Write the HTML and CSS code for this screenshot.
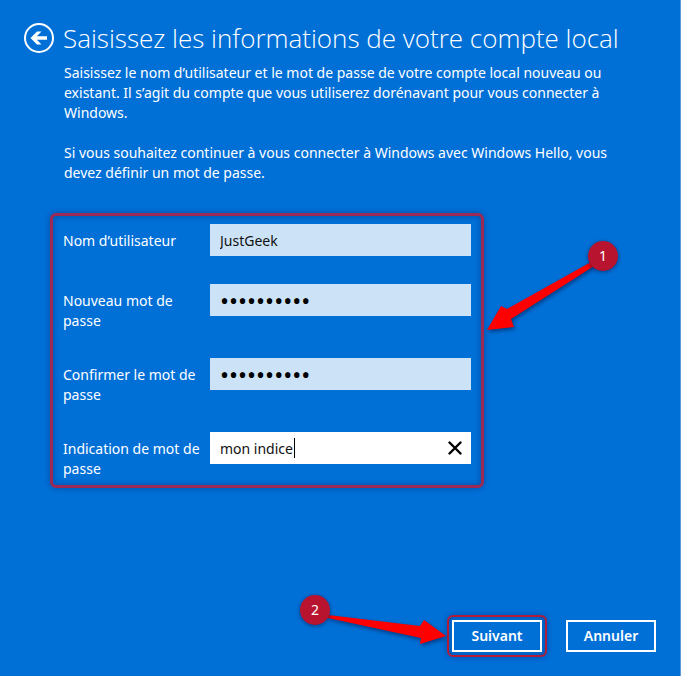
FILE: index.html
```html
<!DOCTYPE html>
<html lang="fr">
  <head>
    <meta charset="UTF-8" />
    <meta name="viewport" content="width=device-width, initial-scale=1.0" />
    <title>Compte local</title>
    <link rel="stylesheet" href="styles.css">
  </head>
  <body>
    <header class="header">
      <button type="button" class="btn-back" aria-label="Retour">
        <svg viewBox="0 0 30 30" width="30" height="30">
          <circle cx="15" cy="15" r="14" fill="none" stroke="#fff" stroke-width="2" />
          <path d="M6.5 15 L13 8.5 H17.5 L12.8 13.2 H23 V16.8 H12.8 L17.5 21.5 H13 Z" fill="#fff" />
        </svg>
      </button>
      <h1>Saisissez les informations de votre compte local</h1>
    </header>

    <main class="content">
      <div class="intro">
        <p>
          Saisissez le nom d’utilisateur et le mot de passe de votre compte local nouveau ou<br />
          existant. Il s’agit du compte que vous utiliserez dorénavant pour vous connecter à<br />
          Windows.
        </p>
        <p>
          Si vous souhaitez continuer à vous connecter à Windows avec Windows Hello, vous<br />
          devez définir un mot de passe.
        </p>
      </div>

      <form id="account" class="account highlight">
        <div class="form-group">
          <label for="username">Nom d’utilisateur</label>
          <input type="text" id="username" value="JustGeek" />
        </div>
        <div class="form-group">
          <label for="password">Nouveau mot de<br />passe</label>
          <input type="password" id="password" value="motdepasse" />
        </div>
        <div class="form-group">
          <label for="confirm">Confirmer le mot de<br />passe</label>
          <input type="password" id="confirm" value="motdepasse" />
        </div>
        <div class="form-group">
          <label for="hint">Indication de mot de<br />passe</label>
          <div class="field">
            <input type="text" id="hint" class="active" value="mon indice" />
            <span class="caret"></span>
            <button type="button" class="btn-clear" aria-label="Effacer">
              <svg viewBox="0 0 14 14" width="14" height="14">
                <path d="M1.5 1.5 L12.5 12.5 M12.5 1.5 L1.5 12.5" stroke="#000" stroke-width="2.4" stroke-linecap="round" />
              </svg>
            </button>
          </div>
        </div>

        <div class="callout callout-form">
          <svg viewBox="0 0 136 96" width="136" height="96">
            <path d="M107 25 L23 72 L17 69 L3 93 L30 90 L27 82 L110 29 Z" fill="#f00" />
          </svg>
          <span class="step">1</span>
        </div>
      </form>
    </main>

    <footer class="actions">
      <div class="highlight next">
        <button type="submit" form="account" class="btn">Suivant</button>
        <div class="callout callout-next">
          <svg viewBox="0 0 152 64" width="152" height="64">
            <path d="M32 20 L124 31 L128 25 L150 41 L124 49 L125 43 L32 23 Z" fill="#f00" />
          </svg>
          <span class="step">2</span>
        </div>
      </div>
      <button type="button" class="btn">Annuler</button>
    </footer>
  </body>
</html>
```
FILE: styles.css
```css
* {
  box-sizing: border-box;
}

body {
  display: flex;
  flex-direction: column;
  min-height: 100vh;
  margin: 0;
  border-right: 1px solid #5b9bdc;
  background-color: #0070d7;
  color: #fff;
  font-family: "Noto Sans", "Open Sans", sans-serif;
  font-size: 14px;
  line-height: 20px;
}

.header {
  display: flex;
  align-items: center;
  gap: 9px;
  padding: 20px 24px 0;
}

h1 {
  margin: 0;
  font-family: "Open Sans", "Noto Sans", sans-serif;
  font-size: 26px;
  font-weight: 300;
  line-height: 36px;
  white-space: nowrap;
}

.btn-back,
.btn-clear {
  display: flex;
  padding: 0;
  border: none;
  background: none;
  cursor: pointer;
}

.content {
  padding: 7px 24px 24px 50px;
}

.intro {
  padding-left: 14px;
  white-space: nowrap;
}

.intro p {
  margin: 0 0 20px;
}

/* Red frame around the parts to fill in or click */
.highlight {
  position: relative;
  border: 3px solid #9c2a55;
  border-radius: 6px;
  box-shadow: 0 0 6px rgba(0, 20, 90, 0.4), inset 0 0 6px rgba(0, 20, 90, 0.4);
}

.account {
  display: flex;
  flex-direction: column;
  gap: 27px;
  width: 434px;
  margin-top: 30px;
  padding: 8px 10px 6px;
}

.form-group {
  display: grid;
  grid-template-columns: 147px 1fr;
  align-items: start;
}

.form-group:first-child {
  margin-bottom: 1px;
}

label {
  padding-top: 7px;
}

input {
  width: 100%;
  height: 32px;
  padding: 0 10px;
  border: none;
  border-radius: 0;
  outline: none;
  background-color: #cce3f7;
  color: #111;
  font: inherit;
}

input[type="password"] {
  color: #000;
  font-size: 24px;
}

input.active {
  background-color: #fff;
}

.field {
  position: relative;
}

.caret {
  position: absolute;
  top: 6px;
  left: 84px;
  width: 1px;
  height: 20px;
  background-color: #000;
}

.btn-clear {
  position: absolute;
  top: 9px;
  right: 9px;
}

.actions {
  display: flex;
  justify-content: flex-end;
  align-items: center;
  gap: 19px;
  margin-top: auto;
  padding: 0 24px 19px;
}

.next {
  padding: 3px;
  border: 2px solid #b01c3c;
}

.btn {
  display: block;
  width: 90px;
  height: 32px;
  padding: 0;
  border: 2px solid #fff;
  background: none;
  color: #fff;
  font: inherit;
  font-weight: 600;
  cursor: pointer;
}

/* Numbered markers with their arrows */
.callout {
  position: absolute;
  pointer-events: none;
}

.callout svg {
  display: block;
  filter: drop-shadow(1px 2px 2px rgba(0, 20, 70, 0.6));
}

.callout-form {
  top: 21px;
  left: 431px;
}

.callout-next {
  top: -22px;
  right: 97px;
}

.step {
  position: absolute;
  top: 4px;
  width: 30px;
  height: 30px;
  border-radius: 50%;
  background-color: #b8142f;
  box-shadow: 0 1px 4px rgba(0, 20, 70, 0.6);
  line-height: 30px;
  text-align: center;
}

.callout-form .step {
  right: 2px;
}

.callout-next .step {
  top: 0;
  left: 4px;
}
```
